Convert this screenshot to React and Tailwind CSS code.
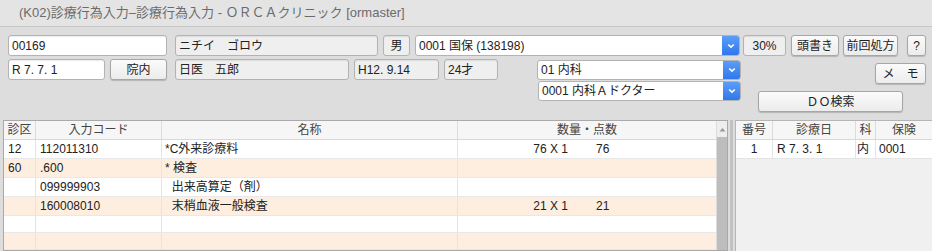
import React from 'react';

const font = { fontFamily: '"Liberation Sans", "Noto Sans CJK JP", sans-serif' };

function Field({ className = '', children, readOnly }) {
  return (
    <div
      className={`h-[21px] flex items-center px-[3px] text-[12px] text-[#222] border border-[#b3b3b3] rounded-[3px] shadow-[inset_0_1px_1px_rgba(0,0,0,0.08)] whitespace-nowrap overflow-hidden ${
        readOnly ? 'bg-[#efefef]' : 'bg-white'
      } ${className}`}
    >
      {children}
    </div>
  );
}

function Btn({ className = '', children }) {
  return (
    <div
      className={`h-[21px] flex items-center justify-center text-[12px] text-[#222] border border-[#a6a6a6] rounded-[3px] bg-gradient-to-b from-[#fbfbfb] to-[#ececec] shadow-[0_1px_1px_rgba(0,0,0,0.18)] whitespace-nowrap ${className}`}
    >
      {children}
    </div>
  );
}

function Chevron() {
  return (
    <svg width="8" height="6" viewBox="0 0 8 6">
      <path d="M1.2 1.5 L4 4.2 L6.8 1.5" fill="none" stroke="white" strokeWidth="1.6" />
    </svg>
  );
}

function Select({ className = '', children }) {
  return (
    <div className={`h-[20px] flex border border-[#b3b3b3] rounded-[3px] bg-white overflow-hidden ${className}`}>
      <div className="flex-1 flex items-center px-[3px] text-[12px] text-[#222] whitespace-nowrap">{children}</div>
      <div className="w-[17px] flex items-center justify-center bg-gradient-to-b from-[#5c9df7] to-[#2f77ec]">
        <Chevron />
      </div>
    </div>
  );
}

const rows = [
  { ku: '12', code: '112011310', name: '*C外来診療料', qty: '76 X 1', pt: '76' },
  { ku: '60', code: '.600', name: '* 検査' },
  { ku: '', code: '099999903', name: '\u00a0\u00a0出来高算定（剤）' },
  { ku: '', code: '160008010', name: '\u00a0\u00a0末梢血液一般検査', qty: '21 X 1', pt: '21' },
  { ku: '', code: '', name: '' },
  { ku: '', code: '', name: '' },
];

export default function App() {
  return (
    <div className="w-[932px] h-[251px] overflow-hidden bg-[#dddddd]" style={font}>
      <div className="h-[27px] border-b border-[#c6c6c6] bg-[#e4e4e4] flex items-center pl-[19px] text-[13px] text-[#6b6b6b] whitespace-nowrap">
        (K02)診療行為入力–診療行為入力 - ＯＲＣＡクリニック [ormaster]
      </div>

      <div className="pl-[8px] pt-[8px]">
        <div className="flex items-start">
          <Field className="w-[159px]">00169</Field>
          <Field readOnly className="w-[203px] ml-[8px]">ニチイ　ゴロウ</Field>
          <Field readOnly className="w-[27px] ml-[5px] justify-center">男</Field>
          <div className="w-[325px] ml-[5px] h-[21px] flex border border-[#b3b3b3] rounded-[3px] bg-white overflow-hidden">
            <div className="flex-1 flex items-center px-[3px] text-[12px] text-[#222]">0001 国保 (138198)</div>
            <div className="w-[17px] flex items-center justify-center bg-gradient-to-b from-[#5c9df7] to-[#2f77ec]">
              <Chevron />
            </div>
          </div>
          <Field readOnly className="w-[43px] ml-[3px] justify-center">30%</Field>
          <Btn className="w-[48px] ml-[5px]">頭書き</Btn>
          <Btn className="w-[55px] ml-[4px]">前回処方</Btn>
          <Btn className="w-[19px] ml-[9px]">?</Btn>
        </div>

        <div className="flex items-start mt-[3px]">
          <Field className="w-[97px]">R 7. 7. 1</Field>
          <Btn className="w-[57px] ml-[5px]">院内</Btn>
          <Field readOnly className="w-[174px] ml-[8px]">日医　五郎</Field>
          <Field readOnly className="w-[85px] ml-[5px]">H12. 9.14</Field>
          <Field readOnly className="w-[54px] ml-[5px]">24才</Field>
          <div className="w-[204px] ml-[39px] mt-[1px] flex flex-col">
            <Select>01 内科</Select>
            <Select className="ml-[1px] mt-[1px]">0001 内科Ａドクター</Select>
          </div>
          <div className="flex-1 flex flex-col">
            <div className="flex justify-end pr-[6px] mt-[4px]">
              <Btn className="w-[51px]">メ　モ</Btn>
            </div>
            <Btn className="w-[145px] ml-[17px] mt-[7px]">ＤＯ検索</Btn>
          </div>
        </div>
      </div>

      <div className="flex mt-[8px] h-[131px]">
        <div className="ml-[3px] w-[725px] border border-[#a9a9a9] bg-white flex">
          <div className="w-[712px] flex flex-col">
            <div className="h-[19px] flex bg-[#f6f6f6] border-b border-[#d8d8d8] text-[12px] text-[#444]">
              <div className="w-[32px] border-r border-[#dcdcdc] flex items-center justify-center">診区</div>
              <div className="w-[126px] border-r border-[#dcdcdc] flex items-center justify-center">入力コード</div>
              <div className="w-[296px] border-r border-[#dcdcdc] flex items-center justify-center">名称</div>
              <div className="flex-1 flex items-center justify-center">数量・点数</div>
            </div>
            {rows.map((r, i) => (
              <div
                key={i}
                className={`h-[19px] flex border-b border-[#e8e8e8] text-[12px] text-[#222] ${
                  i % 2 ? 'bg-[#fdeee0]' : 'bg-white'
                }`}
              >
                <div className="w-[32px] border-r border-[#e4e4e4] flex items-center pl-[4px]">{r.ku}</div>
                <div className="w-[126px] border-r border-[#e4e4e4] flex items-center pl-[4px]">{r.code}</div>
                <div className="w-[296px] border-r border-[#e4e4e4] flex items-center pl-[3px] whitespace-pre">{r.name}</div>
                <div className="flex-1 flex items-center">
                  {r.qty && <span className="w-[110px] text-right">{r.qty}</span>}
                  {r.pt && <span className="ml-[28px]">{r.pt}</span>}
                </div>
              </div>
            ))}
          </div>
          <div className="w-[11px] flex flex-col bg-[#eeeeee] border-l border-[#dcdcdc]">
            <div className="h-[16px] flex items-center justify-center">
              <svg width="7" height="5" viewBox="0 0 7 5">
                <path d="M0.5 4.5 L3.5 1 L6.5 4.5 Z" fill="#9a9a9a" />
              </svg>
            </div>
            <div className="flex-1 bg-[#bdbdbd]" />
          </div>
        </div>

        <div className="ml-[2px] w-[3px] bg-[#c2c2c2]" />

        <div className="ml-[2px] flex-1 border-l border-t border-[#b5b5b5] bg-[#f0f0f0] flex flex-col">
          <div className="h-[19px] flex bg-[#f6f6f6] border-b border-[#d8d8d8] text-[12px] text-[#444]">
            <div className="w-[37px] border-r border-[#dcdcdc] flex items-center justify-center">番号</div>
            <div className="w-[83px] border-r border-[#dcdcdc] flex items-center justify-center">診療日</div>
            <div className="w-[20px] border-r border-[#dcdcdc] flex items-center justify-center">科</div>
            <div className="flex-1 flex items-center justify-center">保険</div>
          </div>
          <div className="h-[19px] flex bg-white border-b border-[#e4e4e4] text-[12px] text-[#222]">
            <div className="w-[37px] border-r border-[#e4e4e4] flex items-center justify-center">1</div>
            <div className="w-[83px] border-r border-[#e4e4e4] flex items-center pl-[4px]">R 7. 3. 1</div>
            <div className="w-[20px] border-r border-[#e4e4e4] flex items-center pl-[1px]">内</div>
            <div className="flex-1 flex items-center pl-[3px]">0001</div>
          </div>
        </div>
      </div>
    </div>
  );
}
